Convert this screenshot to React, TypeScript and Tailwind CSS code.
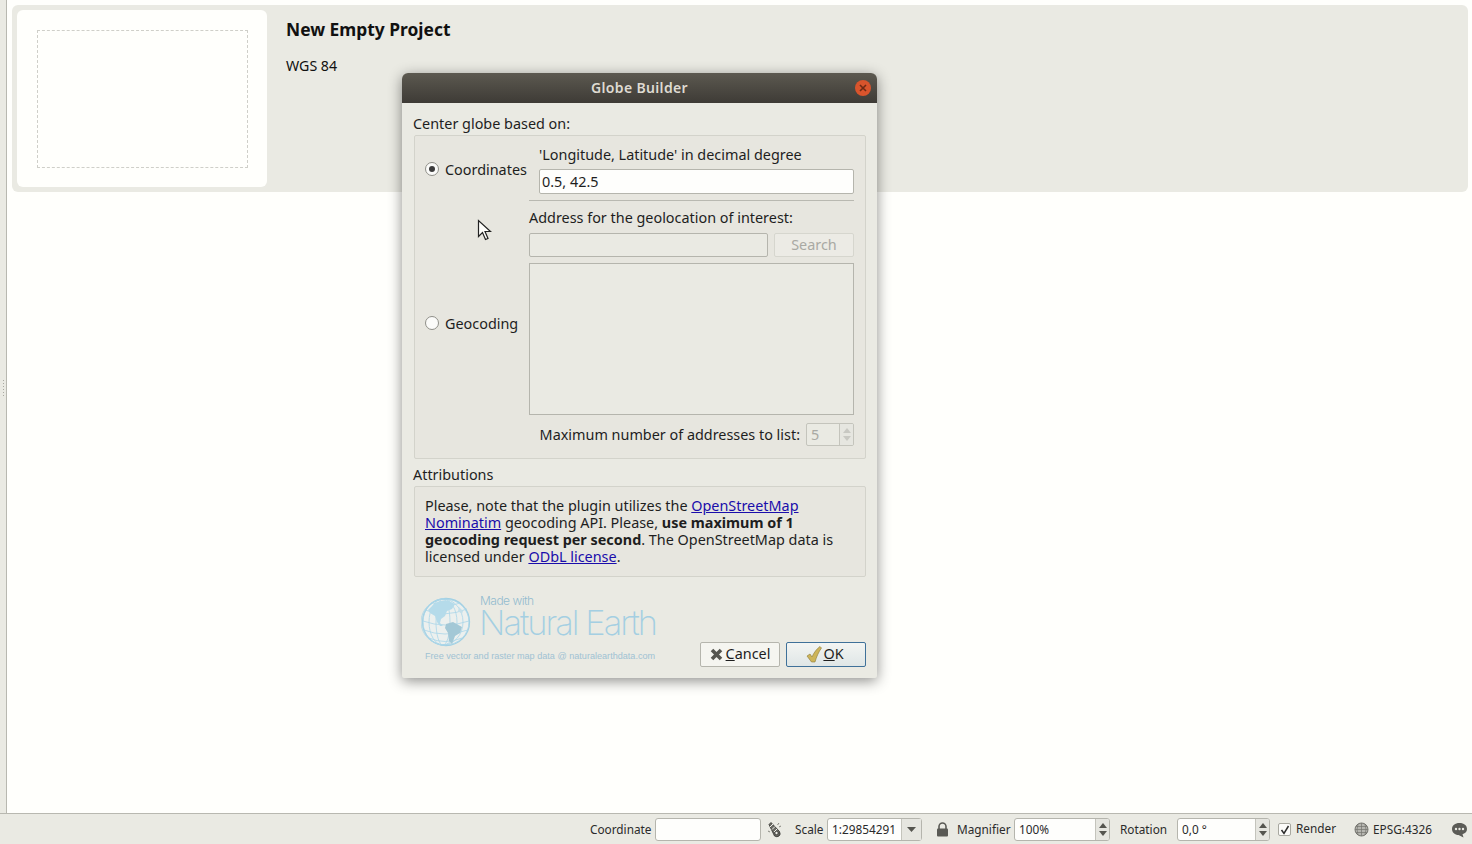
import React from "react";

const font = "font-['Noto_Sans',sans-serif]";

const Radio = ({ on }: { on?: boolean }) => (
  <span className="flex h-[14px] w-[14px] shrink-0 items-center justify-center rounded-full border border-[#8f8f88] bg-[#fbfbf9]">
    {on && <span className="h-[6px] w-[6px] rounded-full bg-[#3c3c3c]" />}
  </span>
);

const SpinArrows = ({ dim }: { dim?: boolean }) => (
  <span className="flex h-full w-[14px] shrink-0 flex-col items-center justify-center gap-[3px] border-l border-[#c4c4bc] bg-[#e6e6e0]">
    <svg width="8" height="5" viewBox="0 0 8 5"><path d="M4 0 8 5H0z" fill={dim ? "#c8c8c2" : "#55554f"} /></svg>
    <svg width="8" height="5" viewBox="0 0 8 5"><path d="M0 0h8L4 5z" fill={dim ? "#c8c8c2" : "#55554f"} /></svg>
  </span>
);

const Globe = () => (
  <svg width="50" height="50" viewBox="0 0 50 50" className="shrink-0">
    <circle cx="25" cy="25" r="23.5" fill="#ecf0ee" stroke="#a2d0e3" strokeWidth="1.3" />
    <g fill="none" stroke="#a9d6e8" strokeWidth="0.8">
      <ellipse cx="22" cy="25" rx="7" ry="23" />
      <ellipse cx="22" cy="25" rx="14" ry="23" />
      <ellipse cx="22" cy="25" rx="20" ry="23" />
      <ellipse cx="24" cy="25" rx="24" ry="23" />
      <path d="M4 13q20 8 42-1M2 24q22 8 46 0M3 33q20 8 44 0M8 41q16 7 33 0M12 6q14 5 27 0" />
    </g>
    <path d="M7 13 14 6q8-4 14-2l6 3-3 5-5 2-2 5-4 3-1 4 3 3-3 0-3-4-2-6-5-3z" fill="#b5dbea" />
    <path d="M25 27l7-2 9 5-2 6-5 3-3 8-3-3-1-8-3-5z" fill="#a3c8d6" />
    <path d="M38 10l4 4-1 3-4-3z" fill="#c5e0ea" />
  </svg>
);

const NaturalEarth = () => (
  <div className="flex flex-col text-[#a4cfe2]">
    <div className="flex items-start gap-[8px]">
      <div className="mt-[2px]"><Globe /></div>
      <div className="flex flex-col font-['Inter',sans-serif]">
        <span className="ml-px text-[12px] leading-[12px] font-light tracking-[-0.5px] text-[#93bccf]">Made with</span>
        <span className="text-[34.5px] leading-[32px] font-extralight tracking-[-2px]">Natural Earth</span>
      </div>
    </div>
    <span className="mt-[3px] ml-[4px] font-['Liberation_Sans',sans-serif] text-[9.1px] leading-[12px] text-[#9fc2d3]">Free vector and raster map data @ naturalearthdata.com</span>
  </div>
);

const Dialog = () => (
  <div className="absolute top-[73px] left-[402px] flex h-[605px] w-[475px] flex-col overflow-hidden rounded-t-[6px] rounded-b-[2px] bg-[#eaeae3] shadow-[0_3px_14px_rgba(0,0,0,0.45)]">
    <div className="relative flex h-[30px] shrink-0 items-center justify-center bg-gradient-to-b from-[#5c5950] to-[#3e3b36] pb-[2px]">
      <span className="text-[14px] font-semibold tracking-[0.35px] text-[#dfdbd2]">Globe Builder</span>
      <span className="absolute top-[7px] right-[6px] flex h-[16px] w-[16px] items-center justify-center rounded-full bg-[#d9542c] text-[#6e2a14]">
        <svg width="8" height="8" viewBox="0 0 8 8"><path d="M1 1l6 6M7 1 1 7" stroke="currentColor" strokeWidth="1.6" /></svg>
      </span>
    </div>

    <div className="flex flex-1 flex-col px-[11px] text-[14.4px] text-[#1e1e1e]">
      <div className="mt-[11px] h-[21px] leading-[20px]">Center globe based on:</div>

      <div className="ml-px flex h-[324px] flex-col rounded-[2px] border border-[#d3d3cb] bg-[#e7e6df] pr-[11px]">
        <div className="flex h-[64px] shrink-0">
          <div className="flex w-[114px] shrink-0 items-center gap-[6px] pt-[2px] pl-[10px]">
            <Radio on />
            <span className="pt-px">Coordinates</span>
          </div>
          <div className="flex flex-1 flex-col pl-[10px]">
            <div className="flex h-[33px] shrink-0 items-center pt-[4px] leading-[20px]">'Longitude, Latitude' in decimal degree</div>
            <div className="flex h-[25px] items-center rounded-[2px] border border-[#b5b5ad] bg-[#fefefc] px-[2px]">0.5, 42.5</div>
          </div>
        </div>
        <div className="ml-[114px] h-px shrink-0 bg-[#b9b9b1]" />
        <div className="flex flex-1">
          <div className="flex w-[114px] shrink-0 items-center gap-[6px] pb-[13px] pl-[10px]">
            <Radio />
            <span className="pt-[2px]">Geocoding</span>
          </div>
          <div className="flex flex-1 flex-col">
            <div className="mt-[7px] h-[19px] leading-[20px]">Address for the geolocation of interest:</div>
            <div className="mt-[6px] flex gap-[6px]">
              <div className="h-[24px] w-[239px] rounded-[2px] border border-[#b5b5ad] bg-[#eaeae3]" />
              <div className="flex h-[24px] flex-1 items-center justify-center rounded-[2px] border border-[#d6d6ce] bg-[#ecebe5] text-[#a9a9a3]">Search</div>
            </div>
            <div className="mt-[6px] h-[152px] border border-[#b5b5ad] bg-[#eaeae3]" />
            <div className="mt-[8px] flex items-center justify-end gap-[6px]">
              <span>Maximum number of addresses to list:</span>
              <div className="flex h-[23px] w-[48px] items-center overflow-hidden rounded-[2px] border border-[#c4c4bc] bg-[#eaeae3] text-[#a9a9a3]">
                <span className="flex-1 pl-[4px]">5</span>
                <SpinArrows dim />
              </div>
            </div>
          </div>
        </div>
      </div>

      <div className="mt-[6px] h-[21px] leading-[20px]">Attributions</div>
      <div className="ml-px h-[91px] rounded-[2px] border border-[#d3d3cb] bg-[#e7e6df] px-[10px] pt-[10px] leading-[17px]">
        Please, note that the plugin utilizes the <a className="text-[#1a0dab] underline">OpenStreetMap<br />Nominatim</a> geocoding API. Please, <b>use maximum of 1<br />geocoding request per second</b>. The OpenStreetMap data is<br />licensed under <a className="text-[#1a0dab] underline">ODbL license</a>.
      </div>

      <div className="flex flex-1 items-end justify-between pb-[11px]">
        <div className="mb-[5px] ml-[8px]"><NaturalEarth /></div>
        <div className="flex gap-[6px] leading-none">
          <div className="flex h-[25px] w-[80px] items-center justify-center gap-[3px] rounded-[2px] border border-[#b5b5ad] bg-[#f5f5f0]">
            <svg width="13" height="13" viewBox="0 0 13 13"><path d="M2 2l9 9M11 2l-9 9" stroke="#55554f" strokeWidth="3.6" /></svg>
            <span><span className="underline">C</span>ancel</span>
          </div>
          <div className="flex h-[25px] w-[80px] items-center justify-center gap-px rounded-[2px] border border-[#3f7199] bg-gradient-to-b from-[#f3f5f3] to-[#dfe6e6] pr-[2px]">
            <svg width="16" height="17" viewBox="0 0 16 17"><path d="M1 10l3-2 2 3C8 6.500 10.500 3 14 .5l1.500 1.500C12.500 6 10.500 11 9 16H5.500z" fill="#cdb55a" stroke="#8d7a38" strokeWidth="0.6" /></svg>
            <span><span className="underline">O</span>K</span>
          </div>
        </div>
      </div>
    </div>
  </div>
);

const StatusBar = () => (
  <div className="flex h-[31px] shrink-0 items-center border-t border-[#b8b8b0] bg-[#eaeae3] pt-[1px] text-[11.8px] text-[#2a2a2a]">
    <span className="ml-[590px] w-[65px]">Coordinate</span>
    <div className="h-[23px] w-[106px] rounded-[3px] border border-[#b5b5ad] bg-[#fefefc]" />
    <svg className="ml-[6px]" width="15" height="17" viewBox="0 0 15 17">
      <path d="M2 3.500l2-2 8.500 9q1.500 3-.5 4.500t-4.500 0z" fill="#6a6a64" stroke="#2f2f2b" strokeWidth="0.8" />
      <path d="M3 6l3-3M5 8.500l3-3M7 11l3-3" stroke="#f0f0ea" strokeWidth="1" />
      <circle cx="9.500" cy="12" r="1.700" fill="#f0f0ea" stroke="#2f2f2b" strokeWidth="0.8" />
      <path d="M12 2l-1.500 2M14 5l-2 1M1 10l2 1" stroke="#77776f" strokeWidth="0.9" />
    </svg>
    <span className="ml-[13px] w-[32px]">Scale</span>
    <div className="flex h-[23px] w-[95px] items-center rounded-[3px] border border-[#b5b5ad] bg-[#fefefc]">
      <span className="flex-1 pl-[4px]">1:29854291</span>
      <span className="flex h-full w-[20px] items-center justify-center border-l border-[#c4c4bc] bg-[#e6e6e0]">
        <svg width="9" height="5" viewBox="0 0 9 5"><path d="M0 0h9L4.500 5z" fill="#55554f" /></svg>
      </span>
    </div>
    <svg className="ml-[14px]" width="13" height="15" viewBox="0 0 13 15">
      <path d="M3 7V4.500a3.500 3.500 0 0 1 7 0V7" fill="none" stroke="#5a5a55" strokeWidth="1.600" />
      <rect x="1" y="6.500" width="11" height="8" rx="1" fill="#5a5a55" />
    </svg>
    <span className="ml-[8px] w-[57px]">Magnifier</span>
    <div className="flex h-[23px] w-[96px] items-center overflow-hidden rounded-[3px] border border-[#b5b5ad] bg-[#fefefc]">
      <span className="flex-1 pl-[4px]">100%</span>
      <SpinArrows />
    </div>
    <span className="ml-[10px] w-[57px]">Rotation</span>
    <div className="flex h-[23px] w-[93px] items-center overflow-hidden rounded-[3px] border border-[#b5b5ad] bg-[#fefefc]">
      <span className="flex-1 pl-[4px]">0,0 °</span>
      <SpinArrows />
    </div>
    <span className="ml-[8px] flex h-[13px] w-[13px] items-center justify-center rounded-[2px] border border-[#a8a8a0] bg-[#fbfbf9]">
      <svg width="10" height="10" viewBox="0 0 10 10"><path d="M1.500 5l2.500 3.500L8.500 1" fill="none" stroke="#2c2c2c" strokeWidth="1.500" /></svg>
    </span>
    <span className="ml-[5px] w-[58px] pb-[1px]">Render</span>
    <svg width="15" height="15" viewBox="0 0 15 15">
      <circle cx="7.500" cy="7.500" r="6.500" fill="#b6b6b0" stroke="#74746e" />
      <path d="M1 7.500h13M2 4.500h11M2 10.500h11M7.500 1v13M4 2q-2 5.500 0 11M11 2q2 5.500 0 11" fill="none" stroke="#74746e" strokeWidth="0.700" />
    </svg>
    <span className="ml-[4px] w-[78px]">EPSG:4326</span>
    <svg width="17" height="16" viewBox="0 0 17 16">
      <path d="M8.500 1C4 1 1 3.500 1 7s3 6 6.500 6l5 2.500-1-3.200C14.500 11.200 16 9.500 16 7c0-3.500-3-6-7.500-6z" fill="#5c5c57" />
      <circle cx="5" cy="7" r="1.200" fill="#eaeae3" /><circle cx="8.500" cy="7" r="1.200" fill="#eaeae3" /><circle cx="12" cy="7" r="1.200" fill="#eaeae3" />
    </svg>
  </div>
);

export default function App() {
  return (
    <div className={`relative flex h-[844px] w-[1472px] flex-col overflow-hidden bg-[#fffffc] ${font}`}>
      <div className="flex min-h-0 flex-1">
        <div className="flex w-[7px] shrink-0 flex-col items-center justify-center gap-[2px] border-r border-[#b8b8b0] bg-[#eaeae3] pb-[38px] pl-px">
          {[1, 2, 3, 4, 5, 6].map((i) => (
            <span key={i} className="h-px w-px bg-[#a8a8a0]" />
          ))}
        </div>
        <div className="flex-1 pt-[5px] pr-[4px] pl-[5px]">
          <div className="flex h-[187px] rounded-[6px] bg-[#eaeae3] p-[5px]">
            <div className="flex h-[177px] w-[250px] items-center justify-center rounded-[6px] bg-[#fffffc]">
              <div className="h-[138px] w-[211px] border border-dashed border-[#cfcfc9]" />
            </div>
            <div className="ml-[19px] flex flex-col text-[#111]">
              <div className="mt-[7px] text-[17.4px] leading-[24px] font-bold">New Empty Project</div>
              <div className="mt-[15px] text-[14.2px] leading-[20px]">WGS 84</div>
            </div>
          </div>
        </div>
      </div>
      <StatusBar />
      <Dialog />
      <svg className="absolute top-[219px] left-[477px]" width="15" height="22" viewBox="0 0 15 22">
        <path d="M1.500 1.500v16l4-4 3 7 2.500-1-3-7h5.500z" fill="#fffffc" stroke="#222" strokeWidth="1.200" />
      </svg>
    </div>
  );
}
